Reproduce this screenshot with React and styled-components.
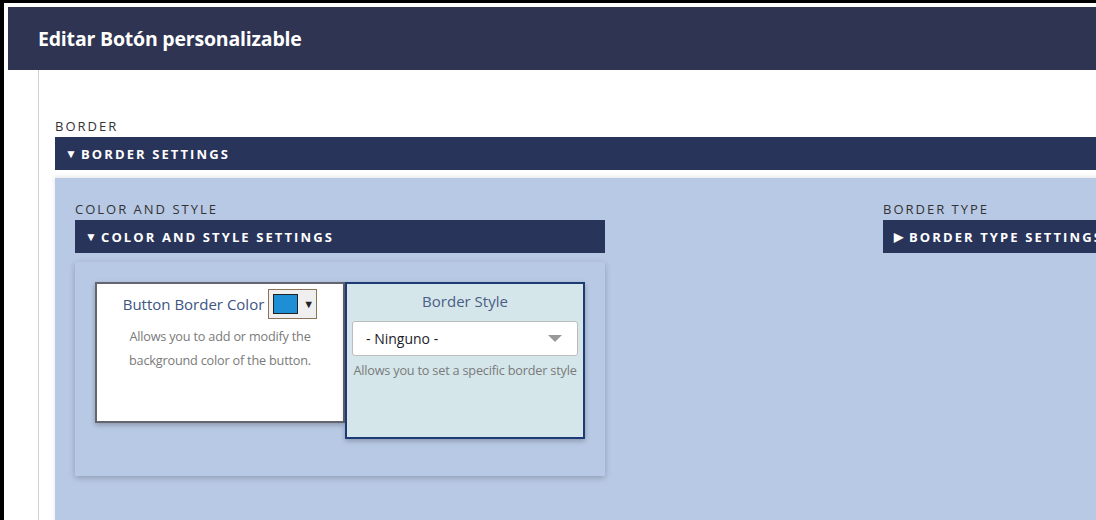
import React from 'react';
import styled, {createGlobalStyle} from 'styled-components';

const GlobalStyle = createGlobalStyle`
html, body {
  margin: 0;
  padding: 0;
  background: #000;
  overflow: hidden;
}
body {
  font-family: "Open Sans", "Noto Sans", Arial, sans-serif;
}
`

const Frame = styled.div`
width: 1096px;
height: 520px;
background-color: #000;
padding: 3px 0 0 4px;
box-sizing: border-box;
overflow: hidden;
`
const Window = styled.div`
background-color: #fff;
padding: 4px 0 0 4px;
height: 100%;
box-sizing: border-box;
width: 1400px;
`
const Header = styled.div`
background-color: #2e3451;
height: 63px;
display: flex;
align-items: center;
padding-left: 30px;
h1{
  margin: 0;
  color: #fff;
  font-size: 19.5px;
  font-weight: 700;
  letter-spacing: -0.2px;
}
`
const Body = styled.div`
margin-left: 30px;
border-left: 1px solid #d0d0d0;
padding: 48px 0 0 16px;
height: 500px;
`
const Label = styled.div`
font-size: 13px;
line-height: 16px;
letter-spacing: 2px;
color: #333;
text-transform: uppercase;
margin-bottom: 3px;
`
const Bar = styled.div`
background-color: #29345a;
height: 33px;
display: flex;
align-items: center;
padding-left: 10px;
color: #fff;
font-size: 13px;
font-weight: 700;
letter-spacing: 2.1px;
text-transform: uppercase;
white-space: nowrap;
overflow: hidden;
box-sizing: border-box;
span{
  display: inline-block;
  width: 11px;
  text-align: center;
  font-size: 12px;
  margin-right: 5px;
  letter-spacing: 0;
}
`
const Panel = styled.div`
margin-top: 8px;
background-color: #b8c9e5;
box-shadow: -1px -2px 4px rgba(0,0,0,.08);
padding: 23px 20px 0 20px;
height: 400px;
display: flex;
gap: 278px;
`
const Column = styled.div`
width: ${p => p.width};
flex-shrink: 0;
`
const CardHolder = styled.div`
margin-top: 9px;
padding: 20px;
height: 214px;
box-sizing: border-box;
background-color: #b8c9e5;
box-shadow: 0 2px 6px rgba(0,0,0,.22);
display: flex;
align-items: flex-start;
`
const Card = styled.div`
width: ${p => p.width}px;
height: ${p => p.height}px;
box-sizing: border-box;
border: 2px solid ${p => p.border};
background-color: ${p => p.bg};
box-shadow: 0 2px 5px rgba(0,0,0,.25);
text-align: center;
padding: ${p => p.pad};
`
const CardTitle = styled.div`
display: flex;
align-items: center;
justify-content: center;
gap: 4px;
color: ${p => p.color || '#3d5483'};
font-size: 15px;
line-height: 20px;
`
const Swatch = styled.div`
width: 49px;
height: 30px;
box-sizing: border-box;
border: 1px solid #8c7358;
background-color: #efefef;
display: flex;
align-items: center;
padding-left: 4px;
gap: 5px;
i{
  display: block;
  width: 25px;
  height: 20px;
  box-sizing: border-box;
  border: 1px solid #222;
  background-color: #1e8fd5;
}
b{
  font-size: 11px;
  color: #222;
}
`
const Desc = styled.p`
margin: ${p => p.mt || '8px'} 0 0;
font-size: 12.7px;
line-height: 24px;
color: #7a7a7a;
letter-spacing: -0.2px;
white-space: nowrap;
`
const Select = styled.div`
margin-top: 10px;
height: 35px;
box-sizing: border-box;
background-color: #fff;
border: 1px solid #bdbdbd;
border-radius: 3px;
display: flex;
align-items: center;
justify-content: space-between;
padding: 0 15px 0 13px;
font-size: 14px;
color: #1b1b2b;
`
const Caret = styled.div`
width: 0;
height: 0;
border-left: 7px solid transparent;
border-right: 7px solid transparent;
border-top: 7px solid #999;
`

const App = () => {
  return (
    <Frame>
      <GlobalStyle/>
      <Window>
        <Header>
          <h1>Editar Botón personalizable</h1>
        </Header>
        <Body>
          <Label>Border</Label>
          <Bar><span>▼</span>Border Settings</Bar>
          <Panel>
            <Column width="530px">
              <Label>Color and Style</Label>
              <Bar><span>▼</span>Color and Style Settings</Bar>
              <CardHolder>
                <Card width={250} height={141} border="#63666e" bg="#fff" pad="5px 0 0">
                  <CardTitle>
                    Button Border Color
                    <Swatch><i/><b>▼</b></Swatch>
                  </CardTitle>
                  <Desc mt="5px">Allows you to add or modify the<br/>background color of the button.</Desc>
                </Card>
                <Card width={240} height={157} border="#1c3a74" bg="#d4e6ea" pad="7px 5px 0">
                  <CardTitle color="#4b5d85">Border Style</CardTitle>
                  <Select>- Ninguno -<Caret/></Select>
                  <Desc mt="2px">Allows you to set a specific border style</Desc>
                </Card>
              </CardHolder>
            </Column>
            <Column width="400px">
              <Label>Border Type</Label>
              <Bar><span>▶</span>Border Type Settings</Bar>
            </Column>
          </Panel>
        </Body>
      </Window>
    </Frame>
  );
}

export default App;
